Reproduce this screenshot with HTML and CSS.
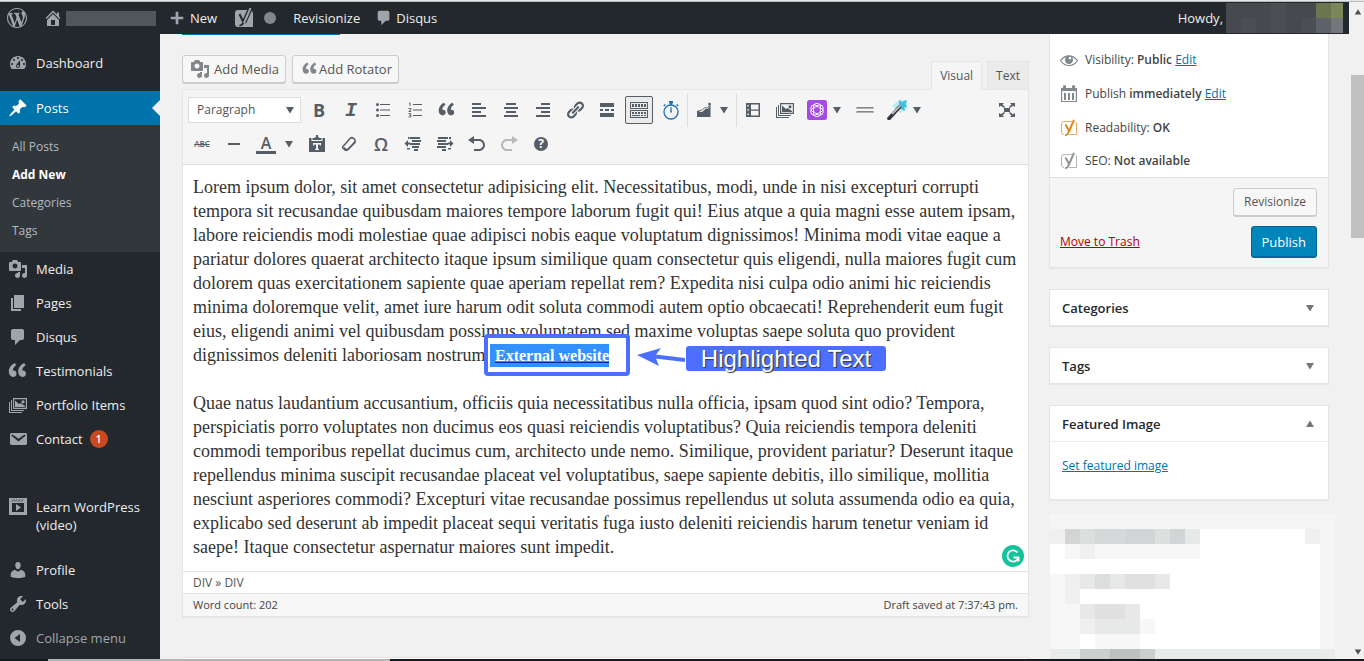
FILE: index.html
```html
<!DOCTYPE html>
<html lang="en">
<head>
<meta charset="utf-8">
<title>Add New Post</title>
<link rel="stylesheet" href="styles.css">
</head>
<body>
<svg class="defs" aria-hidden="true">
  <symbol id="quote" viewBox="0 0 20 20"><path d="M8.54 12.74c0-.87-.24-1.61-.72-2.22-.73-.92-2.14-1.03-2.96-.85-.34-1.93 1.3-4.39 3.42-5.45L6.65 1.94C3.45 3.46.31 6.96.85 11.37 1.19 14.16 2.8 16 5.08 16c1.04 0 1.85-.29 2.5-.88.66-.59.96-1.48.96-2.38zm9.43 0c0-.87-.24-1.61-.72-2.22-.73-.92-2.14-1.03-2.96-.85-.34-1.93 1.3-4.39 3.42-5.45l-1.63-2.28c-3.2 1.52-6.34 5.02-5.8 9.43.34 2.79 1.95 4.63 4.23 4.63 1.04 0 1.85-.29 2.5-.88.66-.59.96-1.48.96-2.38z"/></symbol>
  <symbol id="media" viewBox="0 0 20 20"><path d="M13 11V4c0-.55-.45-1-1-1h-1.67L9 1H5L3.67 3H2c-.55 0-1 .45-1 1v7c0 .55.45 1 1 1h10c.55 0 1-.45 1-1zM7 4.5c1.38 0 2.5 1.12 2.5 2.5S8.38 9.5 7 9.5 4.5 8.38 4.5 7 5.62 4.5 7 4.5zM14 6h5v10.5c0 1.38-1.12 2.5-2.5 2.5S14 17.88 14 16.5s1.12-2.5 2.5-2.5c.17 0 .34.02.5.05V9h-3V6zm-4 8.05V13h2v3.5c0 1.38-1.12 2.5-2.5 2.5S7 17.88 7 16.5 8.12 14 9.5 14c.17 0 .34.02.5.05z"/></symbol>
  <symbol id="comment" viewBox="0 0 20 20"><path d="M5 2h9c1.1 0 2 .9 2 2v7c0 1.1-.9 2-2 2h-2l-5 5v-5H5c-1.1 0-2-.9-2-2V4c0-1.1.9-2 2-2z"/></symbol>
  <symbol id="gallery" viewBox="0 0 20 20"><path fill-rule="evenodd" d="M5 3h14v11H5zM6.200 4.200v8.600h11.600V4.200zM7 12V5.500L11 9l1.500-1 4.500 3v1zM15 5.200a1.600 1.600 0 1 1 0 3.200 1.600 1.600 0 0 1 0-3.200z"/><path d="M3 5h1v10h12v1H3zM1 7h1v10h12v1H1z"/></symbol>
  <symbol id="down" viewBox="0 0 10 10"><path d="M1 2h8L5 8.500z"/></symbol>
  <symbol id="yoast" viewBox="0 0 18 18"><path fill="none" stroke="currentColor" stroke-opacity=".7" d="M12 2.500H4A2.500 2.500 0 0 0 1.500 5v8A2.500 2.500 0 0 0 4 15.500M9 15.500h7.500V5c0-1-.5-2-1.200-2.300"/><path fill="none" stroke="currentColor" stroke-width="2" d="M5.500 5.500L8.800 11.500M14 .8L9 12.500c-.8 2-1.800 3.700-4 3.700"/></symbol>
</svg>
<div class="window-edge"></div>
<div class="window">
<div class="page">
  <header class="adminbar">
    <a class="bar-item logo" href="#" aria-label="WordPress"><svg class="ic" viewBox="0 0 20 20"><path d="M20 10c0-5.510-4.490-10-10-10C4.480 0 0 4.490 0 10c0 5.520 4.480 10 10 10 5.510 0 10-4.480 10-10zM7.780 15.370L4.370 6.220c.55-.02 1.170-.08 1.170-.08.5-.06.44-1.130-.06-1.110 0 0-1.450.11-2.370.11-.18 0-.37 0-.58-.01C4.120 2.690 6.870 1.110 10 1.110c2.330 0 4.450.87 6.050 2.340-.68-.11-1.650.39-1.650 1.580 0 .74.45 1.360.9 2.100.35.61.55 1.360.55 2.460 0 1.490-1.400 5-1.400 5l-3.030-8.370c.54-.02.82-.17.82-.17.5-.05.44-1.250-.06-1.220 0 0-1.440.12-2.380.12-.87 0-2.330-.12-2.330-.12-.5-.03-.56 1.200-.06 1.220l.92.08 1.260 3.410zM17.410 10c.24-.64.74-1.870.43-4.250.7 1.290 1.050 2.710 1.050 4.250 0 3.290-1.730 6.240-4.400 7.780.97-2.590 1.940-5.200 2.920-7.780zM6.100 18.090C3.120 16.650 1.110 13.530 1.110 10c0-1.300.23-2.480.72-3.590C3.250 10.300 4.670 14.200 6.100 18.090zm4.030-6.630l2.580 6.980c-.86.29-1.760.45-2.710.45-.79 0-1.570-.11-2.290-.33.81-2.380 1.620-4.740 2.420-7.100z"/></svg></a>
    <a class="bar-item home" href="#" aria-label="Visit site"><svg class="ic" viewBox="0 0 20 20"><path d="M16 8.500l1.530 1.530-1.060 1.060L10 4.600l-6.470 6.490-1.060-1.060L10 2.500l4 4v-2h2v4zm-6-2.460l6 5.990V18H4v-5.970zM12 17v-5H8v5h4z"/></svg><span class="site-mask"></span></a>
    <a class="bar-item new" href="#"><svg class="ic" viewBox="0 0 20 20"><path d="M17 8.500v3h-5.500V17h-3v-5.500H3v-3h5.500V3h3v5.500z"/></svg>New</a>
    <a class="bar-item seo" href="#" aria-label="SEO"><svg class="ic" viewBox="0 0 20 20"><path d="M4 2h11a4 4 0 0 1 4 4v13H4a3 3 0 0 1-3-3V5a3 3 0 0 1 3-3z"/><path fill="none" stroke="#23282d" stroke-width="4.500" d="M16.500 0L10 14.500"/><path fill="none" stroke="#23282d" stroke-width="2" d="M5.500 6l3.500 7.500M10 13.500c-1 2.500-2 4-4.500 4"/><path fill="none" stroke="#a0a5aa" stroke-width="2" d="M16.500 0L10 15"/></svg><span class="dot"></span></a>
    <a class="bar-item rev" href="#">Revisionize</a>
    <a class="bar-item disqus" href="#"><svg class="ic" viewBox="0 0 20 20"><use href="#comment"/></svg>Disqus</a>
    <a class="bar-item howdy" href="#">Howdy,<svg class="user-mask" viewBox="0 0 117 30" preserveAspectRatio="none" shape-rendering="crispEdges" aria-hidden="true"><path fill="#464a4f" d="M0 0h117v30H0z"/><path fill="#4b4f54" d="M45 0h15v30H45zM75 15h15v15H75zM15 15h15v15H15z"/><path fill="#6b7550" d="M90 0h15v15H90z"/><path fill="#5d6267" d="M90 15h15v15H90z"/><path fill="#7b8758" d="M105 0h12v15h-12z"/><path fill="#74767b" d="M105 15h12v15h-12z"/></svg></a>
  </header>
  <div class="body">
    <nav class="menu">
      <a class="item" href="#"><svg class="ic" viewBox="0 0 20 20"><path fill-rule="evenodd" d="M3.760 16h12.480c1.100-1.370 1.760-3.110 1.760-5 0-4.420-3.580-8-8-8s-8 3.580-8 8c0 1.890.66 3.630 1.760 5zM10 4c.55 0 1 .45 1 1s-.45 1-1 1-1-.45-1-1 .45-1 1-1zM6 6c.55 0 1 .45 1 1s-.45 1-1 1-1-.45-1-1 .45-1 1-1zm8 0c.55 0 1 .45 1 1s-.45 1-1 1-1-.45-1-1 .45-1 1-1zm-5.370 5.550L12 7v6c0 1.100-.9 2-2 2s-2-.9-2-2c0-.57.24-1.080.63-1.450zM4 10c.55 0 1 .45 1 1s-.45 1-1 1-1-.45-1-1 .45-1 1-1zm12 0c.55 0 1 .45 1 1s-.45 1-1 1-1-.45-1-1 .45-1 1-1zm-5 3c0-.55-.45-1-1-1s-1 .45-1 1 .45 1 1 1 1-.45 1-1z"/></svg>Dashboard</a>
      <a class="item current gap-s" href="#"><svg class="ic" viewBox="0 0 20 20"><path d="M10.440 3.020l1.820-1.820 6.360 6.350-1.830 1.820c-1.050-.68-2.480-.57-3.410.36l-.75.75c-.92.93-1.040 2.350-.35 3.410l-1.830 1.820-2.410-2.410-2.800 2.790c-.42.42-3.380 2.710-3.800 2.290s1.860-3.390 2.280-3.810l2.790-2.790L4.100 9.360l1.830-1.820c1.050.69 2.480.57 3.400-.36l.75-.75c.93-.92 1.050-2.350.36-3.410z"/></svg>Posts</a>
      <div class="submenu">
        <a href="#">All Posts</a>
        <a class="on" href="#">Add New</a>
        <a href="#">Categories</a>
        <a href="#">Tags</a>
      </div>
      <a class="item" href="#"><svg class="ic" viewBox="0 0 20 20"><use href="#media"/></svg>Media</a>
      <a class="item" href="#"><svg class="ic" viewBox="0 0 20 20"><path d="M6 15V2h10v13H6zm-1 1h8v2H3V5h2v11z"/></svg>Pages</a>
      <a class="item" href="#"><svg class="ic" viewBox="0 0 20 20"><use href="#comment"/></svg>Disqus</a>
      <a class="item" href="#"><svg class="ic" viewBox="0 0 20 20"><use href="#quote"/></svg>Testimonials</a>
      <a class="item" href="#"><svg class="ic" viewBox="0 0 20 20"><use href="#gallery"/></svg>Portfolio Items</a>
      <a class="item" href="#"><svg class="ic" viewBox="0 0 20 20"><path d="M3.870 4h13.250C18.370 4 19 4.590 19 5.790v8.420c0 1.190-.63 1.790-1.880 1.790H3.870c-1.250 0-1.880-.6-1.880-1.790V5.790c0-1.200.63-1.790 1.880-1.790zm6.620 8.600l6.740-5.530c.24-.2.430-.66.130-1.070-.29-.41-.82-.42-1.170-.17l-5.700 3.860L4.800 5.830c-.35-.25-.88-.24-1.170.17-.3.410-.11.870.13 1.070z"/></svg>Contact<span class="count">1</span></a>
      <a class="item gap-l" href="#"><svg class="ic" viewBox="0 0 20 20"><path fill-rule="evenodd" d="M1 1h18v17H1zM4 6v9h12V6zM8 7l5 3.500L8 14z"/><path stroke="#23282d" d="M4 4.500l2-2M7 4.500l2-2M10 4.500l2-2M13 4.500l2-2"/></svg>Learn WordPress (video)</a>
      <a class="item gap-s" href="#"><svg class="ic" viewBox="0 0 20 20"><path d="M10 9.250c-2.270 0-2.730-3.440-2.730-3.440C7 4.020 7.820 2 9.970 2c2.160 0 2.980 2.020 2.710 3.810 0 0-.41 3.440-2.680 3.440zm0 2.570L12.720 10c2.390 0 4.520 2.330 4.520 4.530v2.490s-3.650 1.130-7.240 1.130c-3.650 0-7.240-1.130-7.240-1.130v-2.490c0-2.250 1.940-4.480 4.470-4.480z"/></svg>Profile</a>
      <a class="item" href="#"><svg class="ic" viewBox="0 0 20 20"><path d="M16.680 9.770c-1.340 1.340-3.300 1.670-4.950.99l-5.410 6.520c-.99.99-2.590.99-3.580 0s-.99-2.590 0-3.570l6.520-5.420c-.68-1.650-.35-3.610.99-4.950 1.280-1.280 3.120-1.620 4.720-1.060l-2.890 2.890 2.820 2.820 2.860-2.870c.53 1.580.18 3.390-1.080 4.650zM3.810 16.210c.4.39 1.040.39 1.430 0 .4-.4.4-1.040 0-1.430-.39-.4-1.030-.4-1.430 0-.39.39-.39 1.030 0 1.430z"/></svg>Tools</a>
      <button class="item collapse" type="button"><svg class="ic" viewBox="0 0 20 20"><path fill-rule="evenodd" d="M10 2a8 8 0 1 1 0 16 8 8 0 0 1 0-16zM12 6l-5.500 4 5.500 4z"/></svg>Collapse menu</button>
    </nav>
    <main class="content">
      <section class="main-col">
        <div class="tab-line"></div>
        <div class="tools">
          <button class="btn" type="button"><svg class="ic" viewBox="0 0 20 20"><use href="#media"/></svg>Add Media</button>
          <button class="btn rot" type="button"><svg class="ic-s" viewBox="0 0 20 20"><use href="#quote"/></svg>Add Rotator</button>
          <div class="tabs"><button class="tab active" type="button">Visual</button><button class="tab" type="button">Text</button></div>
        </div>
        <div class="editor">
          <div class="toolbar">
            <div class="row">
              <label class="format"><select aria-label="Format"><option>Paragraph</option></select><svg class="caret" viewBox="0 0 10 10"><use href="#down"/></svg></label>
              <button class="tb b" type="button">B</button>
              <button class="tb i" type="button">I</button>
              <button class="tb" type="button" aria-label="Bulleted list"><svg class="ic" viewBox="0 0 20 20"><path d="M7 4h10v1H7zM7 9.500h10v1H7zM7 15h10v1H7z"/><circle cx="4.500" cy="4.500" r="1.500"/><circle cx="4.500" cy="10" r="1.500"/><circle cx="4.500" cy="15.500" r="1.500"/></svg></button>
              <button class="tb" type="button" aria-label="Numbered list"><svg class="ic" viewBox="0 0 20 20"><path d="M8 4h9v1H8zM8 9.500h9v1H8zM8 15h9v1H8z"/><path fill="none" stroke="currentColor" stroke-width=".9" d="M4 3.500l1-.7V6M3.500 8.500H6V10L3.700 11.500H6.200M3.500 13.500h2.300v3.500H3.500M4 15.200h1.800"/></svg></button>
              <button class="tb" type="button" aria-label="Blockquote"><svg class="ic-m" viewBox="0 0 20 20"><use href="#quote"/></svg></button>
              <button class="tb" type="button" aria-label="Align left"><svg class="ic" viewBox="0 0 20 20"><path d="M3 3h9v2H3zM3 7h14v2H3zM3 11h9v2H3zM3 15h14v2H3z"/></svg></button>
              <button class="tb" type="button" aria-label="Align center"><svg class="ic" viewBox="0 0 20 20"><path d="M5 3h10v2H5zM3 7h14v2H3zM5 11h10v2H5zM3 15h14v2H3z"/></svg></button>
              <button class="tb" type="button" aria-label="Align right"><svg class="ic" viewBox="0 0 20 20"><path d="M8 3h9v2H8zM3 7h14v2H3zM8 11h9v2H8zM3 15h14v2H3z"/></svg></button>
              <button class="tb" type="button" aria-label="Link"><svg class="ic" viewBox="0 0 20 20"><path d="M17.740 2.760c1.680 1.690 1.680 4.410 0 6.100l-1.530 1.520c-1.120 1.120-2.700 1.470-4.140 1.090l2.620-2.610.76-.77.76-.76c.84-.84.84-2.200 0-3.040-.84-.85-2.200-.85-3.040 0l-.77.76-3.380 3.380c-.37-1.440-.02-3.020 1.100-4.140l1.520-1.530c1.690-1.680 4.420-1.680 6.100 0zM8.590 13.430l5.340-5.340c.42-.42.42-1.100 0-1.520-.44-.43-1.130-.39-1.530 0l-5.330 5.340c-.42.42-.42 1.100 0 1.520.44.43 1.130.39 1.520 0zm-.76 2.290l4.140-4.150c.38 1.440.03 3.020-1.090 4.140l-1.520 1.530c-1.690 1.680-4.410 1.680-6.100 0-1.680-1.680-1.680-4.420 0-6.100l1.530-1.520c1.120-1.120 2.700-1.470 4.140-1.100l-4.140 4.150c-.85.84-.85 2.200 0 3.050.84.84 2.200.84 3.040 0z"/></svg></button>
              <button class="tb" type="button" aria-label="Read more"><svg class="ic" viewBox="0 0 20 20"><path d="M3 3h14v4H3zM3 9h3v2H3zM8 9h4v2H8zM14 9h3v2h-3zM3 13h14v4H3z"/></svg></button>
              <button class="tb" type="button" aria-label="Toolbar toggle"><span class="pressed"><svg class="ic" viewBox="0 0 20 20"><path fill-rule="evenodd" d="M1 2h18v7H1zM2 3v5h16V3zM1 10h18v8H1zM2 11v6h16v-6z"/><path d="M3 4h2v3H3zM6 4h2v3H6zM9 4h2v3H9zM12 4h2v3h-2zM15 4h2v3h-2zM3 12h2v2H3zM6 12h2v2H6zM9 12h2v2H9zM12 12h2v2h-2zM15 12h2v2h-2zM3 15h8v1H3zM12 15h2v1h-2zM15 15h2v1h-2z"/></svg></span></button>
              <button class="tb blue" type="button" aria-label="Timer"><svg class="ic" viewBox="0 0 20 20"><circle cx="10" cy="12" r="7" fill="none" stroke="currentColor" stroke-width="1.300"/><path d="M8 1h4v2.500h-1V5H9V3.500H8zM9.500 7h1l.4 5.500H9.200zM16.200 4l1.500 1.500-1 1-1.500-1.500zM3.800 4L2.300 5.500l1 1L4.800 5z"/></svg></button>
              <span class="sep"></span>
              <button class="tb menu-btn" type="button" aria-label="Charts"><svg class="ic" viewBox="0 0 20 20"><path d="M3 17v-3.500l2-2 3 .5 4-3.500 2 .5 2.500-5V17z"/><path fill="none" stroke="currentColor" stroke-width=".8" d="M4 11l4-1 3-2.500 2.500.5L16 4"/><circle cx="15.500" cy="4" r="1.300"/><circle cx="4" cy="12" r="1.200"/></svg><svg class="caret" viewBox="0 0 10 10"><use href="#down"/></svg></button>
              <span class="sep"></span>
              <button class="tb" type="button" aria-label="Layout"><svg class="ic" viewBox="0 0 20 20"><path fill-rule="evenodd" d="M3 3h14v14H3zM8 4.500v5h7.500v-5zM8 10.800v4.700h7.500v-4.700zM4.300 5v1.500h1.500V5zM4.300 9.300v1.500h1.500V9.300zM4.300 13.500V15h1.500v-1.500z"/></svg></button>
              <button class="tb" type="button" aria-label="Gallery"><svg class="ic" viewBox="0 0 20 20"><use href="#gallery"/></svg></button>
              <button class="tb menu-btn" type="button" aria-label="Shortcodes"><svg class="ic" viewBox="0 0 20 20"><rect width="20" height="20" rx="2.500" fill="#a34be3"/><g fill="none" stroke="#fff" stroke-width=".9"><circle cx="10" cy="7" r="3.700"/><circle cx="10" cy="13" r="3.700"/><circle cx="7.400" cy="8.500" r="3.700"/><circle cx="12.600" cy="8.500" r="3.700"/><circle cx="7.400" cy="11.500" r="3.700"/><circle cx="12.600" cy="11.500" r="3.700"/></g><circle cx="10" cy="10" r="3.600" fill="#a34be3" stroke="#fff" stroke-width=".8"/></svg><svg class="caret" viewBox="0 0 10 10"><use href="#down"/></svg></button>
              <button class="tb" type="button" aria-label="Divider"><svg class="ic" viewBox="0 0 20 20"><path fill="#858585" d="M1.500 7h17v2h-17zM1.500 11h17v2h-17z"/><path fill="#ddd" d="M2 8h16v.5H2zM2 12h16v.5H2z"/></svg></button>
              <button class="tb menu-btn" type="button" aria-label="Magic"><svg class="ic" viewBox="0 0 20 20"><path fill="#b9ecf4" d="M5 6l7-6 8 0v9l-7 4z"/><path fill="#3fc0e0" d="M12 0l3 2L20 0l-1.500 4L20 7l-3 .5 1 3.500-4-2-2-4z"/><path stroke="#34363d" stroke-width="3.600" stroke-linecap="round" d="M2 18.500L12.500 7"/><path stroke="#d4d6dc" stroke-width="1.600" d="M5 14l8.500-8.500"/></svg><svg class="caret" viewBox="0 0 10 10"><use href="#down"/></svg></button>
              <button class="tb full" type="button" aria-label="Fullscreen"><svg class="ic" viewBox="0 0 20 20"><path d="M7 8h6v4H7zM2 3h5L5.500 4.500 8 7 7 8 4 5.800 2 7zM18 3h-5l1.500 1.500L12 7l1 1 3-2.200L18 7zM2 17h5l-1.500-1.500L8 13l-1-1-3 2.200L2 13zM18 17h-5l1.500-1.500L12 13l1-1 3 2.200 2-1.200z"/></svg></button>
            </div>
            <div class="row second">
              <button class="tb abc" type="button">ABC</button>
              <button class="tb" type="button" aria-label="Horizontal line"><svg class="ic" viewBox="0 0 20 20"><path d="M4 9h12v2H4z"/></svg></button>
              <button class="tb menu-btn color" type="button"><span class="letter">A</span><svg class="caret" viewBox="0 0 10 10"><use href="#down"/></svg></button>
              <button class="tb" type="button" aria-label="Paste as text"><svg class="ic" viewBox="0 0 20 20"><path d="M12.400 4L11 2.500V1H9v1.500L7.600 4H5.500v2h9V4zM2 4h2.500v3h11V4H18v14H2z"/><path fill="#f5f5f5" d="M6 9h8v2.500h-1.200v-1H11V15h1v1H8v-1h1v-4.500H7.200v1H6z"/></svg></button>
              <button class="tb" type="button" aria-label="Clear formatting"><svg class="ic" viewBox="0 0 20 20"><path fill="none" stroke="currentColor" stroke-width="1.500" stroke-linejoin="round" d="M4 12.500L11 4.500c1-1 2.500-1 3.500-.2l1 1c.8.8.8 2 0 3L9 15.500c-1 1-2 1-3 .3l-1.700-1.300c-.8-.6-.9-1.300-.3-2z"/><path d="M9 16.500l8-8-.5-1-8.500 7.500-3-2 .5 3.500z"/></svg></button>
              <button class="tb omega" type="button">Ω</button>
              <button class="tb" type="button" aria-label="Outdent"><svg class="ic" viewBox="0 0 20 20"><path d="M7 3h10v2H7zM9 6h9v2H9zM7 9h10v2H7zM9 12h7v2H9zM11 15h4v2h-4zM5 3h1.500v2H5zM1.500 9.500L5 6v2.500h2v2H5V13zM4 14h3v1.500H4z"/></svg></button>
              <button class="tb" type="button" aria-label="Indent"><svg class="ic" viewBox="0 0 20 20"><path d="M3 3h10v2H3zM2 6h9v2H2zM3 9h10v2H3zM2 12h9v2H2zM7 15h4v2H7zM14 3h2v2h-2zM18.500 9.500L15 6v2.500h-2v2h2V13zM13 14h3v1.500h-3z"/></svg></button>
              <button class="tb" type="button" aria-label="Undo"><svg class="ic" viewBox="0 0 20 20"><path d="M12 5H7V2L1 6l6 4V7h5c2.200 0 4 1.800 4 4s-1.800 4-4 4H7v2h5c3.300 0 6-2.700 6-6s-2.700-6-6-6z"/></svg></button>
              <button class="tb off" type="button" aria-label="Redo"><svg class="ic" viewBox="0 0 20 20"><path d="M8 5h5V2l6 4-6 4V7H8c-2.200 0-4 1.800-4 4s1.800 4 4 4h5v2H8c-3.300 0-6-2.700-6-6s2.700-6 6-6z"/></svg></button>
              <button class="tb" type="button"><span class="help">?</span></button>
            </div>
          </div>
          <div class="text" contenteditable="true" spellcheck="false">
            <p>Lorem ipsum dolor, sit amet consectetur adipisicing elit. Necessitatibus, modi, unde in nisi excepturi corrupti<br>tempora sit recusandae quibusdam maiores tempore laborum fugit qui! Eius atque a quia magni esse autem ipsam,<br>labore reiciendis modi molestiae quae adipisci nobis eaque voluptatum dignissimos! Minima modi vitae eaque a<br>pariatur dolores quaerat architecto itaque ipsum similique quam consectetur quis eligendi, nulla maiores fugit cum<br>dolorem quas exercitationem sapiente quae aperiam repellat rem? Expedita nisi culpa odio animi hic reiciendis<br>minima doloremque velit, amet iure harum odit soluta commodi autem optio obcaecati! Reprehenderit eum fugit<br>eius, eligendi animi vel quibusdam possimus voluptatem sed maxime voluptas saepe soluta quo provident<br>dignissimos deleniti laboriosam nostrum.<span class="mark"><span class="frame"></span><a class="selected" href="#">External website</a><svg class="arrow" viewBox="0 0 48 20"><path fill="none" stroke="#4d6fff" stroke-width="4" d="M14 9l34 4"/><path fill="#4d6fff" d="M0 8L24 1l-6 8 4 10z"/></svg><span class="callout">Highlighted Text</span></span></p>
            <p>Quae natus laudantium accusantium, officiis quia necessitatibus nulla officia, ipsam quod sint odio? Tempora,<br>perspiciatis porro voluptates non ducimus eos quasi reiciendis voluptatibus? Quia reiciendis tempora deleniti<br>commodi temporibus repellat ducimus cum, architecto unde nemo. Similique, provident pariatur? Deserunt itaque<br>repellendus minima suscipit recusandae placeat vel voluptatibus, saepe sapiente debitis, illo similique, mollitia<br>nesciunt asperiores commodi? Excepturi vitae recusandae possimus repellendus ut soluta assumenda odio ea quia,<br>explicabo sed deserunt ab impedit placeat sequi veritatis fuga iusto deleniti reiciendis harum tenetur veniam id<br>saepe! Itaque consectetur aspernatur maiores sunt impedit.</p>
            <svg class="grammar" viewBox="0 0 22 22"><circle cx="11" cy="11" r="11" fill="#15c39a"/><path fill="none" stroke="#fff" stroke-width="1.800" d="M15.500 7.500A5.600 5.600 0 1 0 15.800 14M11.500 12.500h5v4"/></svg>
          </div>
          <div class="path">DIV » DIV</div>
          <div class="status"><span>Word count: 202</span><span>Draft saved at 7:37:43 pm.</span></div>
        </div>
        <div class="next-box"></div>
      </section>
      <aside class="side-col">
        <section class="box publish">
          <div class="rows">
            <div class="meta"><svg class="ic" viewBox="0 0 20 20"><path d="M18.300 9.500C15 4.900 8.500 3.800 3.900 7.200c-1.200.9-2.200 2.100-3 3.400.2.4.5.8.8 1.200 3.300 4.600 9.600 5.600 14.200 2.400.9-.7 1.700-1.400 2.400-2.400.3-.4.5-.8.8-1.200-.3-.4-.5-.8-.8-1.100zm-8.200-2.300c.5-.5 1.300-.5 1.800 0s.5 1.300 0 1.800-1.300.5-1.800 0-.5-1.300 0-1.800zm-.1 7.700c-3.100 0-6-1.600-7.700-4.200C3.500 9 5.100 7.800 7 7.200c-.7.8-1 1.700-1 2.700 0 2.200 1.700 4.100 4 4.100 2.200 0 4.100-1.700 4.100-4v-.1c0-1-.4-2-1.100-2.700 1.900.6 3.500 1.800 4.700 3.500-1.700 2.600-4.600 4.200-7.700 4.200z"/></svg><span>Visibility: <b>Public</b> <a href="#">Edit</a></span></div>
            <div class="meta"><svg class="ic" viewBox="0 0 20 20"><path fill-rule="evenodd" d="M2 4h2V2.500A1.500 1.500 0 0 1 7 2.500V4h6V2.500a1.500 1.500 0 0 1 3 0V4h2v14H2zM3.200 7v10h13.600V7z"/><path d="M5 9h2v7H5zM9 9h2v7H9zM13 9h2v7h-2z"/></svg><span>Publish <b>immediately</b> <a href="#">Edit</a></span></div>
            <div class="meta"><svg class="ic orange" viewBox="0 0 18 18"><use href="#yoast"/></svg><span>Readability: <b>OK</b></span></div>
            <div class="meta tight"><svg class="ic gray" viewBox="0 0 18 18"><use href="#yoast"/></svg><span>SEO: <b>Not available</b></span></div>
          </div>
          <div class="actions">
            <button class="btn" type="button">Revisionize</button>
            <div class="final"><a class="trash" href="#">Move to Trash</a><button class="primary" type="button">Publish</button></div>
          </div>
        </section>
        <section class="box"><h2>Categories<svg class="caret" viewBox="0 0 10 10"><use href="#down"/></svg></h2></section>
        <section class="box"><h2>Tags<svg class="caret" viewBox="0 0 10 10"><use href="#down"/></svg></h2></section>
        <section class="box"><h2>Featured Image<svg class="caret up" viewBox="0 0 10 10"><use href="#down"/></svg></h2><div class="inside"><a href="#">Set featured image</a></div></section>
        <svg class="mosaic" viewBox="0 0 285 150" shape-rendering="crispEdges" aria-hidden="true"><path fill="#f5f5f5" d="M0 0h285v150H0z"/><path fill="#fff" d="M0 15h270v120H0z"/><path fill="#f0f0f0" d="M0 15h15v15H0zM255 15h15v15h-15zM30 30h15v15H30zM15 75h15v15H15z"/><path fill="#d3d4d5" d="M15 15h15v15H15zM120 15h15v15h-15zM75 15h30v15H75z"/><path fill="#dcdfde" d="M30 15h15v15H30zM105 15h15v15h-15zM45 60h15v15H45z"/><path fill="#d6d8da" d="M45 15h30v15H45z"/><path fill="#e7e8e8" d="M135 15h15v15h-15zM30 60h15v15H30zM60 60h15v15H60zM105 60h15v15h-15zM30 90h15v15H30zM75 90h15v15H75zM45 105h30v15H45zM75 105h15v15H75z"/><path fill="#f7f7f7" d="M15 30h15v15H15zM45 30h105v15H45zM0 60h15v75H0zM15 90h15v45H15zM45 120h45v15H45zM90 105h15v15H90z"/><path fill="#e0e0e0" d="M75 60h30v15H75zM45 90h30v15H45z"/><path fill="#efefef" d="M30 105h15v15H30zM15 60h15v15H15z"/><path fill="#e9eaea" d="M0 135h285v15H0z"/><path fill="#cccfcd" d="M30 135h30v15H30zM90 135h15v15H90z"/><path fill="#bfc1c0" d="M60 135h30v15H60z"/></svg>
      </aside>
    </main>
  </div>
</div>
<div class="scroll" aria-hidden="true">
  <svg class="caret up" viewBox="0 0 10 10"><use href="#down"/></svg>
  <span class="thumb"></span>
  <svg class="caret" viewBox="0 0 10 10"><use href="#down"/></svg>
</div>
</div>
<div class="taskbar"><span></span></div>
</body>
</html>
```

FILE: styles.css
```css
* { box-sizing: border-box; }
body { margin: 0; height: 100vh; display: flex; flex-direction: column; overflow: hidden; background: #f1f1f1; color: #444; font: 12px/18px "Open Sans", "Noto Sans", sans-serif; }
button, select { font: inherit; color: inherit; margin: 0; }
a { color: #0073aa; }
h2, p { margin: 0; }
svg { display: block; flex: none; fill: currentColor; }
.defs { position: absolute; width: 0; height: 0; }
.ic { width: 20px; height: 20px; }
.ic-m { width: 18px; height: 18px; }
.ic-s { width: 16px; height: 16px; }
.caret { width: 10px; height: 10px; }
.up { transform: rotate(180deg); }

.window-edge { flex: none; height: 2px; background: #e6e6e6; border-bottom: 1px solid #b5bdbd; }
.window { flex: 1; min-height: 0; display: flex; }
.page { flex: 1; min-width: 0; display: flex; flex-direction: column; }
.taskbar { flex: none; height: 2px; background: #121a20; padding-left: 48px; }
.taskbar span { display: block; width: 26%; height: 2px; background: #b4b4b4; }
.scroll { width: 15px; display: flex; flex-direction: column; align-items: center; padding: 5px 0 2px 2px; color: #505050; }
.scroll .caret { width: 8px; }
.thumb { width: 13px; height: 163px; margin: 58px 0 auto; background: #c1c1c1; }

.adminbar { flex: none; height: 32px; display: flex; align-items: center; background: #23282d; color: #eee; font-size: 13px; position: relative; z-index: 2; }
.bar-item { display: flex; align-items: center; gap: 4px; color: #eee; text-decoration: none; }
.bar-item .ic { color: #a0a5aa; width: 18px; height: 18px; }
.logo { padding: 0 16px 0 7px; }
.logo .ic, .home .ic, .seo .ic { width: 20px; height: 20px; }
.home { padding-right: 12px; gap: 3px; }
.site-mask { width: 90px; height: 15px; background: #50565b; }
.new { padding-right: 17px; }
.seo { padding-right: 17px; gap: 10px; }
.dot { width: 12px; height: 12px; border-radius: 50%; background: #82878c; }
.rev { padding-right: 15px; }
.disqus { gap: 3px; }
.howdy { margin-left: auto; padding-right: 6px; gap: 3px; }
.user-mask { width: 117px; height: 30px; }

.body { flex: 1; min-height: 0; display: flex; }
.menu { flex: none; width: 160px; padding-top: 12px; background: #23282d; font-size: 13px; }
.item { display: flex; gap: 8px; padding: 8px 8px; color: #eee; text-decoration: none; position: relative; }
.item .ic { color: #a0a5aa; margin: -1px 0; }
.current { background: #0073aa; color: #fff; }
.current .ic { color: #fff; }
.current::after { content: ""; position: absolute; right: 0; top: 9px; border: 8px solid transparent; border-right-color: #f1f1f1; border-left: 0; }
.gap-s { margin-top: 11px; }
.gap-l { margin-top: 34px; }
.collapse { width: 100%; border: 0; background: none; color: #a0a5aa; text-align: left; }
.count { width: 18px; height: 18px; margin-left: -1px; border-radius: 50%; background: #ca4a1f; color: #fff; font-size: 10px; font-weight: 600; text-align: center; }
.submenu { padding: 8px 12px 7px; background: #32373c; font-size: 12px; }
.submenu a { display: block; padding: 5px 0; color: #b4b9be; text-decoration: none; }
.submenu .on { color: #fff; font-weight: 700; }

.content { flex: 1; min-width: 0; display: flex; gap: 20px; padding: 0 20px 0 22px; }
.main-col { flex: 1; min-width: 0; }
.tab-line { width: 158px; height: 1px; background: #0073aa; }
.tools { display: flex; align-items: flex-start; gap: 6px; padding-top: 20px; height: 54px; }
.btn { display: flex; align-items: center; gap: 4px; height: 28px; padding: 0 6px; border: 1px solid #ccc; border-radius: 3px; background: #f7f7f7; box-shadow: 0 1px 0 #ccc; color: #555; white-space: nowrap; }
.btn svg { color: #82878c; }
.tools .btn { padding: 0 6px 0 7px; font-size: 13px; line-height: 18px; }
.tools .rot { padding: 0 6px 0 9px; gap: 1px; }
.tabs { display: flex; gap: 5px; margin: 6px 0 0 auto; position: relative; z-index: 1; }
.tab { height: 28px; padding: 0 8px; border: 1px solid #e5e5e5; border-bottom: 0; background: #ebebeb; color: #555; }
.active { height: 29px; background: #f5f5f5; }

.editor { border: 1px solid #e5e5e5; background: #fff; box-shadow: 0 1px 1px rgba(0,0,0,.04); }
.toolbar { padding: 3px 5px; background: #f5f5f5; border-bottom: 1px solid #ddd; color: #555d66; }
.row { display: flex; align-items: center; height: 34px; }
.second { margin-left: -2px; }
.format { display: block; position: relative; width: 113px; margin-right: 2px; }
.format select { display: block; width: 100%; height: 26px; padding: 0 8px; border: 1px solid #ddd; border-radius: 0; background: #fff; color: #555; appearance: none; }
.format .caret { position: absolute; right: 6px; top: 8px; }
.tb { display: flex; align-items: center; justify-content: center; flex: none; width: 32px; height: 28px; padding: 0; border: 0; background: none; }
.b { font: 700 18px "Open Sans", sans-serif; }
.i { font: italic 700 20px "Liberation Mono", monospace; }
.menu-btn { width: 48px; justify-content: flex-start; gap: 5px; padding-left: 6px; }
.color { width: 51px; gap: 8px; }
.letter { width: 20px; border-bottom: 3px solid #555d66; font: 600 16px/16px "Open Sans", sans-serif; text-align: center; }
.pressed { display: block; padding: 3px; border: 1px solid #555d66; border-radius: 2px; background: #ebebeb; }
.blue { color: #2271b1; }
.sep { width: 1px; height: 34px; background: #ddd; }
.full { margin-left: auto; }
.abc { font-size: 8px; font-weight: 600; text-decoration: line-through; }
.omega { font: 600 18px "Open Sans", sans-serif; }
.off { color: #b5babf; }
.help { width: 14px; height: 14px; border-radius: 50%; background: #555d66; color: #fff; font: 700 12px/14px "Open Sans", sans-serif; }

.text { position: relative; padding: 10px 10px 12px; color: #333; font: 18px/24px "Liberation Serif", serif; white-space: nowrap; outline: 0; }
.text p + p { margin-top: 24px; }
.mark { position: relative; z-index: 1; }
.frame { position: absolute; z-index: -1; left: -6px; top: -11px; width: 146px; height: 42px; border: 4px solid #4d6fff; border-radius: 4px; background: #fff; }
.selected { padding: 3px 0 3px 5px; background: #3390ff; color: #fff; font-size: 16px; line-height: 18px; font-weight: 700; text-decoration-color: #0a1fb4; }
.arrow { position: absolute; left: 147px; top: 2px; width: 48px; height: 20px; }
.callout { position: absolute; left: 196px; top: 1px; width: 200px; border-radius: 3px; background: #4d6fff; color: #fff; font: 24px/25px "Liberation Sans", sans-serif; text-align: center; text-shadow: 1px 1px 1px #333; }
.grammar { position: absolute; right: 4px; bottom: 4px; width: 22px; height: 22px; }
.path, .status { border-top: 1px solid #e5e5e5; padding: 0 10px; line-height: 21px; }
.path { color: #555; }
.status { display: flex; justify-content: space-between; background: #f7f7f7; font-size: 11px; line-height: 22px; }
.next-box { margin-top: 40px; height: 20px; border: 1px solid #e5e5e5; background: #fff; }

.side-col { flex: none; width: 280px; }
.box { margin-bottom: 21px; border: 1px solid #e5e5e5; background: #fff; box-shadow: 0 1px 1px rgba(0,0,0,.04); }
.publish { border-top: 0; }
.rows { padding: 9px 9px 0; }
.meta { display: flex; align-items: center; gap: 6px; height: 34px; }
.meta .ic { color: #82878c; }
.meta .orange { color: #dc8a1e; width: 18px; margin: 0 1px; }
.meta .gray { color: #8f9499; width: 18px; margin: 0 1px; }
.meta b { font-weight: 600; }
.tight { height: 32px; }
.actions { display: flex; flex-direction: column; align-items: flex-end; gap: 10px; padding: 10px 11px 10px 10px; border-top: 1px solid #ddd; background: #f5f5f5; }
.actions .btn { padding: 0 10px; }
.final { align-self: stretch; display: flex; justify-content: space-between; align-items: center; }
.trash { color: #a00; }
.primary { height: 31px; padding: 0 10px; border: 1px solid #006799; border-radius: 3px; background: #0085ba; box-shadow: 0 1px 0 #006799; color: #fff; font-size: 13px; }
.box h2 { display: flex; justify-content: space-between; align-items: center; height: 35px; padding: 0 13px 0 12px; color: #23282d; font-size: 13px; font-weight: 600; }
.box h2 .caret { color: #72777c; }
.inside { padding: 15px 12px 24px; border-top: 1px solid #eee; }
.mosaic { width: 285px; height: 150px; margin: -7px 0 0 1px; }
```
